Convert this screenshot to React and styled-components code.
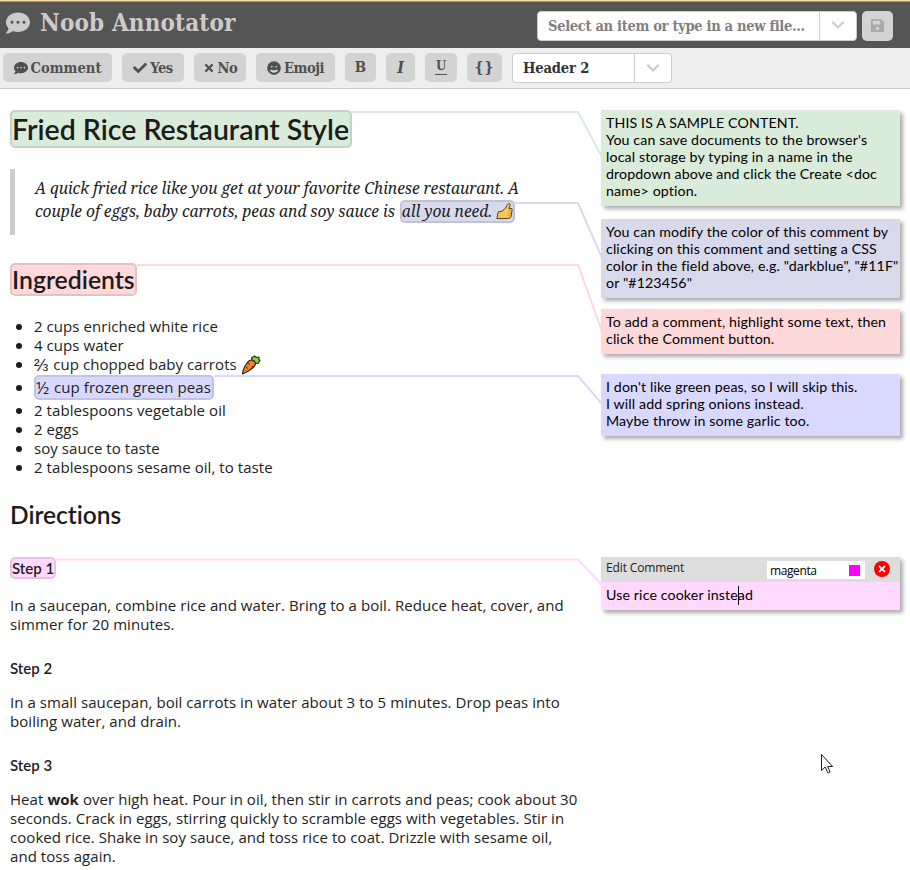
import React from "react";
import styled, { createGlobalStyle } from "styled-components";
import { FaCommentDots, FaCheck, FaTimes, FaGrin, FaSave } from "react-icons/fa";

const slab = '"DejaVu Serif Condensed", "DejaVu Serif", serif';

const GlobalStyle = createGlobalStyle`
  * { box-sizing: border-box; }
  body { margin: 0; background: #fff; color: #222; overflow: hidden; font-family: "Open Sans", sans-serif; }
`;

const Page = styled.div`
  position: relative;
  width: 910px;
  height: 870px;
  overflow: hidden;
`;

const Header = styled.header`
  display: flex;
  align-items: center;
  height: 48px;
  padding: 2px 17px 0 6px;
  background: #555;
  border-top: 1px solid #fbdca0;
  box-shadow: inset 0 1px 0 #b8935a;
`;

const Brand = styled.h1`
  display: flex;
  align-items: center;
  gap: 10px;
  flex: 1;
  height: 30px;
  margin: 0 0 6px;
  color: #ccc;
  font: bold 24px/30px ${slab};
  letter-spacing: 0.15px;
  white-space: nowrap;
`;

const Toolbar = styled.nav`
  display: flex;
  gap: 10px;
  height: 41px;
  padding: 5px 3px 0;
  background: #eee;
  border-bottom: 1px solid #ccc;
`;

const ToolButton = styled.button`
  display: flex;
  align-items: center;
  justify-content: center;
  gap: 3px;
  width: ${(p) => p.$width}px;
  height: 29px;
  padding: 0;
  border: 0;
  border-radius: 5px;
  background: #d3d3d3;
  color: #505050;
  font: bold 14.6px/27px ${slab};
  letter-spacing: ${(p) => p.$tracking || 0}px;
  white-space: nowrap;
`;

const Glyph = styled.span`
  height: 27px;
  font-size: ${(p) => p.$size || 16}px;
  font-style: ${(p) => (p.$italic ? "italic" : "normal")};
`;

const UnderlineGlyph = styled.span`
  width: 12px;
  height: 15px;
  border-bottom: 1.5px solid #505050;
  font-size: 13px;
  line-height: 11px;
  text-align: center;
`;

const Picker = styled.div`
  display: flex;
  flex: none;
  width: ${(p) => p.$width}px;
  height: 30px;
  border: 1px solid #ccc;
  border-radius: 4px;
  background: #fff;
`;

const PickerLabel = styled.div`
  flex: 1;
  padding-left: 10px;
  color: ${(p) => (p.$muted ? "#808080" : "#333")};
  font: bold 14.6px/28px ${slab};
  letter-spacing: ${(p) => (p.$muted ? -0.34 : -0.15)}px;
  white-space: nowrap;
`;

const PickerArrow = styled.div`
  display: grid;
  place-items: center;
  width: 37px;
  border-left: 1px solid #ccc;
`;

const SaveButton = styled.button`
  display: grid;
  place-items: center;
  width: 31px;
  height: 30px;
  margin-left: 5px;
  padding: 0;
  border: 0;
  border-radius: 5px;
  background: #d3d3d3;
  color: #aaa;
`;

const Workspace = styled.main`
  display: flex;
  padding: 21px 0 0 10px;
`;

const Document = styled.article`
  width: 591px;
`;

const Comments = styled.aside`
  width: 299px;
`;

const Mark = styled.span`
  display: inline-flex;
  align-items: center;
  height: ${(p) => p.$height}px;
  width: ${(p) => p.$width}px;
  border: 2px solid rgba(0, 0, 0, 0.1);
  border-radius: 5px;
  background: ${(p) => p.$color};
  white-space: pre;
  vertical-align: top;
`;

const Heading = styled.h2`
  height: ${(p) => p.$height}px;
  margin: ${(p) => p.$top || 0}px 0 0;
  color: #1c1c1c;
  font: 600 ${(p) => p.$size}px/${(p) => p.$height}px Lato, sans-serif;
  font-variant-ligatures: none;
`;

const Quote = styled.blockquote`
  height: 66px;
  margin: 21px 0 0;
  padding: 8px 0 0 20px;
  border-left: 5px solid #ccc;
  color: #1c1c1c;
  font: italic 15.6px/23px "Noto Serif", serif;
`;

const QuoteLine = styled.div`
  display: flex;
  gap: 5px;
  height: 23px;
  letter-spacing: -0.05px;
  white-space: nowrap;
`;

const Ingredients = styled.ul`
  margin: 21px 0 0;
  padding: 0;
  list-style: none;
  font-size: 15px;
`;

const Ingredient = styled.li`
  display: flex;
  align-items: center;
  height: ${(p) => (p.$tall ? 27 : 19)}px;
  line-height: 19px;
  letter-spacing: 0.06px;
  white-space: pre;
  &::before {
    content: "";
    width: 6px;
    height: 6px;
    margin: 0 12px 0 6px;
    border-radius: 50%;
    background: #1c1c1c;
  }
`;

const Fraction = styled.span`
  margin-right: 1px;
  font-size: 17px;
`;

const Paragraph = styled.p`
  margin: ${(p) => p.$top || 17}px 0 0;
  font-size: 15px;
  line-height: 19px;
  letter-spacing: 0.06px;
  white-space: nowrap;
`;

const cardText = `
  font: 14.2px/17px Lato, sans-serif;
  font-variant-ligatures: none;
  letter-spacing: 0.12px;
  white-space: nowrap;
  color: #000;
`;

const Card = styled.section`
  width: 299px;
  height: ${(p) => p.$height}px;
  margin-top: ${(p) => p.$top || 0}px;
  padding: 4px 5px 0;
  background: ${(p) => p.$color};
  box-shadow: 3px 3px 4px rgba(0, 0, 0, 0.32);
  ${cardText}
`;

const Editor = styled.section`
  height: 53px;
  margin-top: 121px;
  background: #ffd9ff;
  box-shadow: 3px 3px 4px rgba(0, 0, 0, 0.32);
`;

const EditorBar = styled.div`
  display: flex;
  align-items: flex-start;
  height: 25px;
  padding: 0 0 0 5px;
  background: #ddd;
  font-size: 12px;
  line-height: 21px;
  letter-spacing: -0.13px;
`;

const ColorField = styled.div`
  display: flex;
  align-items: center;
  justify-content: space-between;
  width: 98px;
  height: 18px;
  margin: 4px 9px 0 auto;
  padding: 1px 5px 0 3px;
  background: #fff;
  color: #000;
  letter-spacing: -0.4px;
`;

const Swatch = styled.i`
  width: 11px;
  height: 11px;
  background: #f0f;
`;

const CloseButton = styled.button`
  display: grid;
  place-items: center;
  width: 16px;
  height: 16px;
  margin: 4px 10px 0 0;
  padding: 0;
  border: 0;
  border-radius: 50%;
  background: #f00;
  color: #fff;
`;

const EditorText = styled.div`
  display: flex;
  padding: 4px 5px 0;
  ${cardText}
`;

const Caret = styled.i`
  width: 1px;
  height: 19px;
  margin-right: -1px;
  background: #000;
`;

const Overlay = styled.svg`
  position: absolute;
  inset: 0;
  pointer-events: none;
`;

const Arrow = () => (
  <svg width="14" height="9" viewBox="0 0 14 9" fill="none" stroke="#ccc" strokeWidth="2.3">
    <path d="M2 1.5 7 6.5l5-5" strokeLinecap="round" strokeLinejoin="round" />
  </svg>
);

const Thumb = () => (
  <svg width="19" height="19" viewBox="0 0 19 19" stroke="#332c22" strokeLinejoin="round">
    <path d="M1 17.5 2.5 10l4.5-1c3-2 4.500-4.500 6-7.500 1-2 3.500-1 3 1L14.500 6H17q1.500 0 1.200 1.700L17 15q-.5 2-2.500 2.200L8 17.500Z" fill="#fdc64b" />
    <path d="M14 8.500h3M13.500 11h3M13 13.700h3" stroke="#b87c24" strokeWidth=".7" />
  </svg>
);

const Carrot = () => (
  <svg width="20" height="20" viewBox="0 0 20 20" stroke="#2b211a" strokeWidth="1.100" strokeLinejoin="round">
    <path d="M11 5 10.500 3l3-2 2 1.500L18 2v2.500l1 1-2 3-3-.5Z" fill="#86d14b" />
    <path d="M1.500 19C2 14 5 8 8.500 5.500 11 4 14.500 6 14.500 9 13.500 13 5 17.500 1.500 19Z" fill="#f47c2a" />
    <path d="m7 8 2 1.500M5 12l2 1.500M11 11l1 1" strokeWidth=".8" />
  </svg>
);

const links = [
  ["#d9ecd9", "352,112 578,112 602,157"],
  ["#d9d9ec", "515,203 578,203 602,258"],
  ["#ffd9d9", "137,265 578,265 602,331"],
  ["#d9d9ff", "214,376 578,376 602,404"],
  ["#ffd9ff", "56,559.5 578,559.500 602,585"],
];

export default function App() {
  return (
    <Page>
      <GlobalStyle />
      <Header>
        <Brand><FaCommentDots size={24} />Noob Annotator</Brand>
        <Picker $width={320}>
          <PickerLabel $muted>Select an item or type in a new file...</PickerLabel>
          <PickerArrow><Arrow /></PickerArrow>
        </Picker>
        <SaveButton><FaSave size={15} /></SaveButton>
      </Header>
      <Toolbar>
        <ToolButton $width={109}><FaCommentDots size={14} />Comment</ToolButton>
        <ToolButton $width={62} $tracking={-0.5}><FaCheck size={14} />Yes</ToolButton>
        <ToolButton $width={52} $tracking={-0.5}><FaTimes size={12} />No</ToolButton>
        <ToolButton $width={79} $tracking={-0.5}><FaGrin size={14} />Emoji</ToolButton>
        <ToolButton $width={31}><Glyph $size={15}>B</Glyph></ToolButton>
        <ToolButton $width={29}><Glyph $italic>I</Glyph></ToolButton>
        <ToolButton $width={32}><UnderlineGlyph>U</UnderlineGlyph></ToolButton>
        <ToolButton $width={35} $tracking={1}><Glyph $size={15}>{"{}"}</Glyph></ToolButton>
        <Picker $width={160}>
          <PickerLabel>Header 2</PickerLabel>
          <PickerArrow><Arrow /></PickerArrow>
        </Picker>
      </Toolbar>
      <Workspace>
        <Document>
          <Heading $height={38} $size={28.5}>
            <Mark $height={38} $width={342} $color="#d9ecd9">Fried Rice Restaurant Style</Mark>
          </Heading>
          <Quote>
            <QuoteLine>A quick fried rice like you get at your favorite Chinese restaurant. A</QuoteLine>
            <QuoteLine>
              <span>couple of eggs, baby carrots, peas and soy sauce is</span>
              <Mark $height={23} $width={115} $color="#d9d9ec">all you need. <Thumb /></Mark>
            </QuoteLine>
          </Quote>
          <Heading $height={33} $size={24.8} $top={28}>
            <Mark $height={33} $width={127} $color="#ffd9d9">Ingredients</Mark>
          </Heading>
          <Ingredients>
            <Ingredient>2 cups enriched white rice</Ingredient>
            <Ingredient>4 cups water</Ingredient>
            <Ingredient><Fraction>⅔</Fraction> cup chopped baby carrots <Carrot /></Ingredient>
            <Ingredient $tall><Mark $height={25} $width={180} $color="#d9d9ff"><Fraction>½</Fraction> cup frozen green peas</Mark></Ingredient>
            <Ingredient>2 tablespoons vegetable oil</Ingredient>
            <Ingredient>2 eggs</Ingredient>
            <Ingredient>soy sauce to taste</Ingredient>
            <Ingredient>2 tablespoons sesame oil, to taste</Ingredient>
          </Ingredients>
          <Heading $height={30} $size={24.5} $top={23}>Directions</Heading>
          <Heading $height={22} $size={15} $top={27}>
            <Mark $height={22} $width={46} $color="#ffd9ff">Step 1</Mark>
          </Heading>
          <Paragraph>In a saucepan, combine rice and water. Bring to a boil. Reduce heat, cover, and<br />simmer for 20 minutes.</Paragraph>
          <Heading $height={22} $size={15} $top={23}>Step 2</Heading>
          <Paragraph $top={14}>In a small saucepan, boil carrots in water about 3 to 5 minutes. Drop peas into<br />boiling water, and drain.</Paragraph>
          <Heading $height={22} $size={15} $top={23}>Step 3</Heading>
          <Paragraph $top={14}>Heat <b>wok</b> over high heat. Pour in oil, then stir in carrots and peas; cook about 30<br />seconds. Crack in eggs, stirring quickly to scramble eggs with vegetables. Stir in<br />cooked rice. Shake in soy sauce, and toss rice to coat. Drizzle with sesame oil,<br />and toss again.</Paragraph>
        </Document>
        <Comments>
          <Card $height={96} $color="#d9ecd9">THIS IS A SAMPLE CONTENT.<br />You can save documents to the browser's<br />local storage by typing in a name in the<br />dropdown above and click the Create &lt;doc<br />name&gt; option.</Card>
          <Card $height={79} $top={13} $color="#d9d9ec">You can modify the color of this comment by<br />clicking on this comment and setting a CSS<br />color in the field above, e.g. "darkblue", "#11F"<br />or "#123456"</Card>
          <Card $height={45} $top={11} $color="#ffd9d9">To add a comment, highlight some text, then<br />click the Comment button.</Card>
          <Card $height={62} $top={20} $color="#d9d9ff">I don't like green peas, so I will skip this.<br />I will add spring onions instead.<br />Maybe throw in some garlic too.</Card>
          <Editor>
            <EditorBar>
              Edit Comment
              <ColorField>magenta<Swatch /></ColorField>
              <CloseButton><FaTimes size={10} /></CloseButton>
            </EditorBar>
            <EditorText>Use rice cooker inste<Caret />ad</EditorText>
          </Editor>
        </Comments>
      </Workspace>
      <Overlay width="910" height="870">
        {links.map(([color, points]) => (
          <polyline key={points} points={points} fill="none" stroke={color} strokeWidth="2" />
        ))}
        <path d="M821.500 754.500v16l3.700-3.500 2.600 5.800q1 .5 2.300-.9l-2.500-5.400h5Z" fill="#fff" stroke="#1c1c2c" />
      </Overlay>
    </Page>
  );
}
